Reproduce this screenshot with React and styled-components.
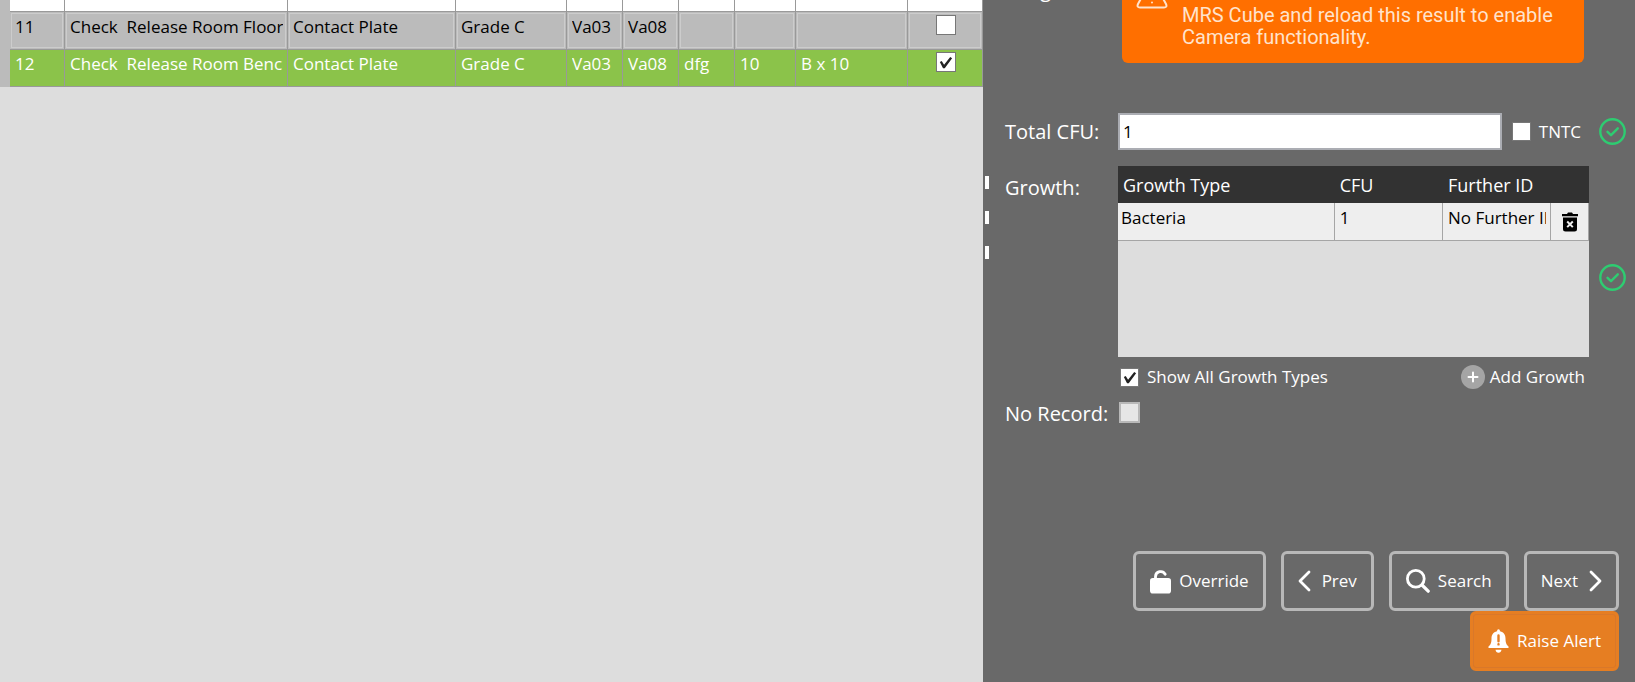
import React, { useState } from 'react';
import styled, { createGlobalStyle } from 'styled-components';

const GlobalStyle = createGlobalStyle`
  * {
    box-sizing: border-box;
  }
  body {
    margin: 0;
    overflow: hidden;
    background: #ddd;
    color: #fff;
    font-family: "Open Sans", "Noto Sans", sans-serif;
    font-size: 17px;
    line-height: 24px;
  }
  button, input {
    font: inherit;
    color: inherit;
  }
`

const checkMark = `url("data:image/svg+xml,%3Csvg xmlns='http://www.w3.org/2000/svg' viewBox='0 0 18 18'%3E%3Cpath d='M3 8.5 5 7.5 7.5 11.5 14 3.2 16 4.4 8.2 15.2 6.4 15.2Z' fill='%23222'/%3E%3C/svg%3E")`

const Screen = styled.main`
  display: grid;
  grid-template-columns: 983fr 652fr;
  height: 100vh;
`

const ListPane = styled.section`
  min-width: 0;
  overflow: hidden;
  background: #ddd;
`

const SampleTable = styled.table`
  width: 100%;
  table-layout: fixed;
  border-collapse: separate;
  border-spacing: 0;
  border-left: 10px solid #bbb;
`

const SampleRow = styled.tr`
  height: ${props => props.$cut ? 12 : props.$selected ? 37 : 38}px;
  background: ${props => props.$selected ? '#8bc34a' : props.$cut ? '#fff' : '#bbb'};
  color: ${props => props.$selected ? '#fff' : '#000'};
  td {
    padding: ${props => props.$selected ? 2 : 3}px 4px 0 5px;
    vertical-align: top;
    white-space: pre;
    border-right: 1px solid #999;
    border-bottom: 1px solid #999;
    box-shadow: ${props => props.$selected || props.$cut ? 'none' : 'inset 0 0 0 1px #bbb, inset 0 0 0 2px #ccc'};
  }
  td:last-child {
    text-align: center;
  }
`

const Clip = styled.div`
  overflow: hidden;
  white-space: pre;
`

const CheckBox = styled.input.attrs({ type: 'checkbox' })`
  appearance: none;
  flex: none;
  display: block;
  width: ${props => props.$size || 19}px;
  height: ${props => props.$size || 19}px;
  margin: ${props => props.$centered ? '0 auto' : '0'};
  border: 1px solid #777;
  background: #fff;
  &:checked {
    background: #fff ${checkMark} center / 17px no-repeat;
  }
  &:disabled {
    border: 2px solid #b8b8b8;
    background: #e6e6e6;
  }
`

const DetailPane = styled.section`
  display: flex;
  min-width: 0;
  overflow: hidden;
  background: #696969;
`

const Splitter = styled.div`
  flex: none;
  display: flex;
  flex-direction: column;
  gap: 22px;
  width: 22px;
  padding: 176px 0 0 2px;
  span {
    width: 4px;
    height: 13px;
    background: #fff;
  }
`

const Detail = styled.div`
  flex: 1;
  min-width: 0;
  display: flex;
  flex-direction: column;
  justify-content: space-between;
`

const Form = styled.div`
  display: grid;
  grid-template-columns: 113px 1fr 46px;
`

const FieldName = styled.label`
  padding-top: ${props => props.$top || 0}px;
  font-size: 20px;
  line-height: 28px;
  white-space: nowrap;
`

const HiddenTop = styled(FieldName)`
  margin-top: -24px;
`

const Warning = styled.div`
  display: flex;
  gap: 14px;
  height: 63px;
  margin: 0 5px 50px 4px;
  padding: 4px 16px 0 14px;
  border-radius: 0 0 6px 6px;
  background: #ff6f00;
  color: #ffe3cc;
  font-family: Roboto, sans-serif;
  font-size: 20px;
  line-height: 22px;
  svg {
    flex: none;
    margin-top: -25px;
  }
  p {
    margin: 0;
  }
`

const CfuRow = styled.div`
  display: flex;
  align-items: center;
  height: 37px;
  margin-bottom: 16px;
`

const TextBox = styled.input`
  flex: 1;
  min-width: 0;
  height: 37px;
  margin-right: 10px;
  padding: 0 3px;
  border: 2px solid #abadb3;
  border-radius: 0;
  background: #fff;
  color: #000;
`

const CheckLabel = styled.label`
  display: flex;
  align-items: center;
  gap: 8px;
`

const TntcLabel = styled(CheckLabel)`
  padding-right: 8px;
`

const Status = styled.div`
  display: flex;
  align-items: center;
  justify-content: flex-end;
  height: ${props => props.$height}px;
  padding-right: 9px;
`

const GrowthBox = styled.div`
  height: 191px;
  margin-bottom: 7px;
  background: #ddd;
`

const GrowthTable = styled.table`
  width: 100%;
  table-layout: fixed;
  border-collapse: separate;
  border-spacing: 0;
  color: #000;
  th {
    height: 37px;
    padding: 1px 5px 0;
    background: #323232;
    color: #fff;
    font-size: 18px;
    font-weight: 400;
    text-align: left;
    white-space: nowrap;
  }
  td {
    height: 38px;
    padding: 3px 4px 0 5px;
    vertical-align: top;
    background: #eee;
    border-right: 1px solid #a5a5a5;
    border-bottom: 1px solid #a5a5a5;
  }
  td:first-child {
    padding-left: 3px;
  }
`

const IconButton = styled.button`
  display: flex;
  margin: 6px auto 0;
  padding: 0;
  border: 0;
  background: none;
  color: #000;
`

const GrowthActions = styled.div`
  display: flex;
  align-items: center;
  justify-content: space-between;
  height: 26px;
  margin-bottom: 10px;
  padding: 0 4px 0 2px;
`

const AddButton = styled.button`
  display: flex;
  align-items: center;
  gap: 5px;
  padding: 0;
  border: 0;
  background: none;
`

const NoRecord = styled.div`
  padding: 2px 1px;
`

const Footer = styled.footer`
  display: flex;
  flex-direction: column;
  align-items: flex-end;
  padding: 0 16px 11px 0;
`

const Buttons = styled.div`
  display: flex;
  gap: 15px;
`

const Button = styled.button`
  display: flex;
  align-items: center;
  gap: ${props => props.$gap || 8}px;
  height: 60px;
  padding: 0 14px;
  border: 3px solid #b8b8b8;
  border-radius: 6px;
  background: transparent;
  white-space: nowrap;
`

const AlertButton = styled(Button)`
  padding: 0 15px;
  border-color: #e67e22;
  background: #e67e22;
  box-shadow: inset 0 0 0 1px #d9782a;
`

const WarningIcon = () => (
  <svg width="32" height="30" viewBox="0 0 32 30" fill="none" stroke="currentColor" strokeWidth="2" strokeLinejoin="round" strokeLinecap="round">
    <path d="M14 3 2 25Q0.500 28.500 4 28.500H28Q31.500 28.500 30 25L18 3Q16 0 14 3Z" />
    <path d="M16 10V18M16 23.500V23.600" />
  </svg>
)

const OkIcon = () => (
  <svg width="27" height="27" viewBox="0 0 27 27" fill="none" stroke="#2ecc71" strokeWidth="2.400" strokeLinecap="round" strokeLinejoin="round">
    <circle cx="13.500" cy="13.500" r="12.200" />
    <path d="M8.500 13.800 12 17.200 18.800 10.300" />
  </svg>
)

const TrashIcon = () => (
  <svg width="18" height="20" viewBox="0 0 18 20">
    <path d="M1 2H6L7 .5H11L12 2H17V4.300H1ZM2 5.500H16V17Q16 19.500 13.500 19.500H4.500Q2 19.500 2 17Z" fill="currentColor" />
    <path d="M6.200 9.500 11.800 15.100M11.800 9.500 6.200 15.100" stroke="#eee" strokeWidth="2" />
  </svg>
)

const PlusIcon = () => (
  <svg width="24" height="24" viewBox="0 0 24 24">
    <circle cx="12" cy="12" r="12" fill="#a5a5a5" />
    <path d="M12 7.500V16.500M7.500 12H16.500" stroke="#fff" strokeWidth="2" strokeLinecap="round" />
  </svg>
)

const UnlockIcon = () => (
  <svg width="21" height="25" viewBox="0 0 21 25">
    <path d="M5.500 12V7.500A5.200 5.200 0 0 1 15.200 5.200" fill="none" stroke="#fff" strokeWidth="2.800" strokeLinecap="round" />
    <rect y="9" width="21" height="15.500" rx="2.800" fill="#fff" />
  </svg>
)

const Chevron = ({ d }) => (
  <svg width="13" height="22" viewBox="0 0 13 22" fill="none" stroke="#fff" strokeWidth="2.800" strokeLinecap="round" strokeLinejoin="round">
    <path d={d} />
  </svg>
)

const SearchIcon = () => (
  <svg width="24" height="24" viewBox="0 0 24 24" fill="none" stroke="#fff" strokeLinecap="round">
    <circle cx="9.800" cy="9.800" r="8.400" strokeWidth="2.800" />
    <path d="M16 16 22.200 22.200" strokeWidth="3.200" />
  </svg>
)

const BellIcon = () => (
  <svg width="21" height="24" viewBox="0 0 21 24">
    <path d="M9 2.200Q9 .3 10.500 .3T12 2.200C16 3 17.500 6 17.500 9.500C17.500 14 18.500 15.800 20.500 17.500V19H.5V17.500C2.500 15.800 3.500 14 3.500 9.500C3.500 6 5 3 9 2.200ZM7.500 20.800H13.500Q13 23.700 10.500 23.700T7.500 20.800Z" fill="#fff" />
    <path d="M10.500 6.500V12.200M10.500 15.200V15.400" stroke="#e67e22" strokeWidth="2.400" strokeLinecap="round" />
  </svg>
)

const columns = [55, 223, 168, 111, 56, 56, 56, 61, 112, null]

const samples = [
  { cells: ['11', 'Check  Release Room Floor', 'Contact Plate', 'Grade C', 'Va03', 'Va08', '', '', ''], selected: false },
  { cells: ['12', 'Check  Release Room Bench', 'Contact Plate', 'Grade C', 'Va03', 'Va08', 'dfg', '10', 'B x 10'], selected: true }
]

function SampleList() {
  return (
    <ListPane>
      <SampleTable>
        <colgroup>
          {columns.map((width, i) => <col key={i} style={width ? { width } : undefined} />)}
        </colgroup>
        <tbody>
          <SampleRow $cut>
            {columns.map((width, i) => <td key={i}></td>)}
          </SampleRow>
          {samples.map(({ cells, selected }) => (
            <SampleRow key={cells[0]} $selected={selected}>
              {cells.map((cell, i) => <td key={i}><Clip>{cell}</Clip></td>)}
              <td>
                <CheckBox $size={20} $centered defaultChecked={selected} aria-label={`Sample ${cells[0]}`} />
              </td>
            </SampleRow>
          ))}
        </tbody>
      </SampleTable>
    </ListPane>
  )
}

function ResultDetail() {
  const [total, setTotal] = useState('1')
  return (
    <DetailPane>
      <Splitter><span /><span /><span /></Splitter>
      <Detail>
        <Form>
          <HiddenTop as="div">Image:</HiddenTop>
          <Warning role="alert">
            <WarningIcon />
            <p>MRS Cube and reload this result to enable Camera functionality.</p>
          </Warning>
          <div />

          <FieldName $top={5} htmlFor="total">Total CFU:</FieldName>
          <CfuRow>
            <TextBox id="total" value={total} onChange={e => setTotal(e.target.value)} />
            <TntcLabel><CheckBox />TNTC</TntcLabel>
          </CfuRow>
          <Status $height={37}><OkIcon /></Status>

          <FieldName as="div" $top={8}>Growth:</FieldName>
          <div>
            <GrowthBox>
              <GrowthTable>
                <colgroup>
                  <col style={{ width: '46%' }} />
                  <col style={{ width: '23%' }} />
                  <col style={{ width: '23%' }} />
                  <col />
                </colgroup>
                <thead>
                  <tr>
                    <th>Growth Type</th>
                    <th>CFU</th>
                    <th colSpan={2}>Further ID</th>
                  </tr>
                </thead>
                <tbody>
                  <tr>
                    <td>Bacteria</td>
                    <td>1</td>
                    <td><Clip>No Further ID</Clip></td>
                    <td><IconButton aria-label="Delete growth"><TrashIcon /></IconButton></td>
                  </tr>
                </tbody>
              </GrowthTable>
            </GrowthBox>
            <GrowthActions>
              <CheckLabel><CheckBox defaultChecked />Show All Growth Types</CheckLabel>
              <AddButton><PlusIcon />Add Growth</AddButton>
            </GrowthActions>
          </div>
          <Status $height={223}><OkIcon /></Status>

          <FieldName htmlFor="no-record">No Record:</FieldName>
          <NoRecord><CheckBox id="no-record" $size={21} disabled /></NoRecord>
        </Form>
        <Footer>
          <Buttons>
            <Button><UnlockIcon />Override</Button>
            <Button $gap={11}><Chevron d="M11 2 2 11 11 20" />Prev</Button>
            <Button><SearchIcon />Search</Button>
            <Button $gap={11}>Next<Chevron d="M2 2 11 11 2 20" /></Button>
          </Buttons>
          <AlertButton><BellIcon />Raise Alert</AlertButton>
        </Footer>
      </Detail>
    </DetailPane>
  )
}

export default function App() {
  return (
    <Screen>
      <GlobalStyle />
      <SampleList />
      <ResultDetail />
    </Screen>
  )
}
